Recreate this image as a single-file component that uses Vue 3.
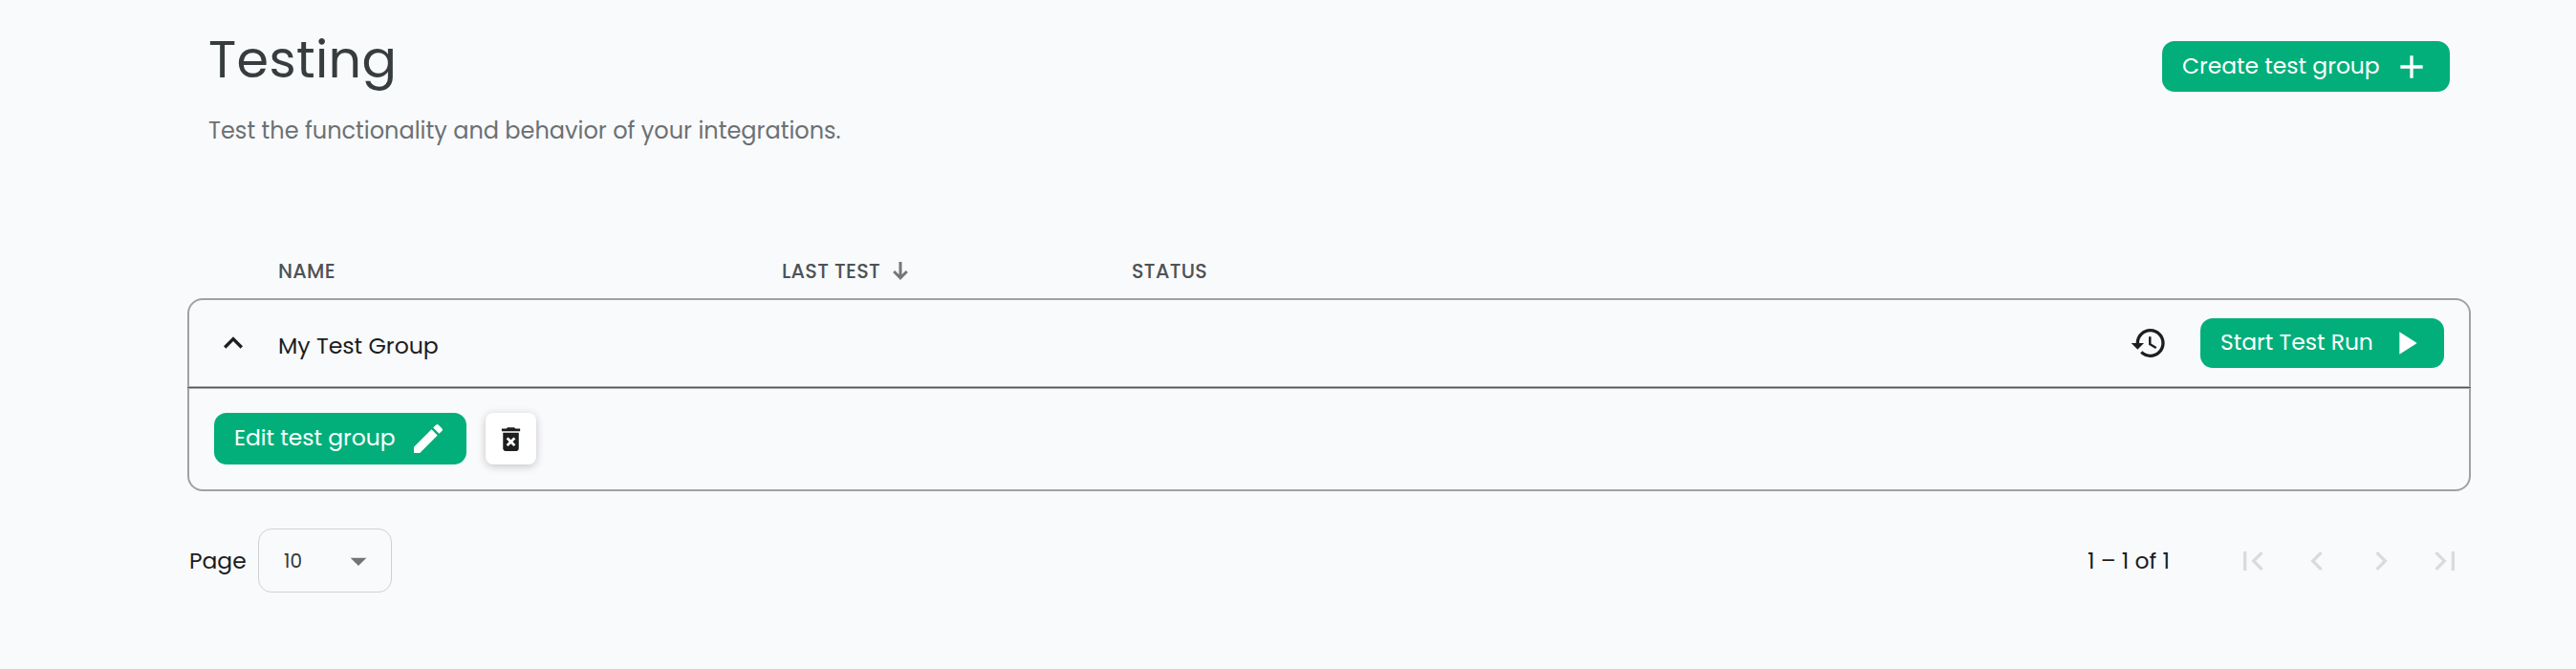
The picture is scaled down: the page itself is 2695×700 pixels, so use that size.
<script setup>
const columns = [
  { key: 'name', label: 'NAME' },
  { key: 'last', label: 'LAST TEST', sorted: true },
  { key: 'status', label: 'STATUS' },
]
const pager = [
  'M18.41 16.59 13.82 12l4.59-4.59L17 6l-6 6 6 6zM6 6h2v12H6z',
  'M15.41 7.41 14 6l-6 6 6 6 1.41-1.41L10.83 12z',
  'M10 6 8.59 7.41 13.17 12l-4.58 4.59L10 18l6-6z',
  'M5.59 7.41 10.18 12l-4.59 4.59L7 18l6-6-6-6zM16 6h2v12h-2z',
]
</script>

<template>
  <main class="page">
    <header class="top">
      <div>
        <h1 class="title">Testing</h1>
        <p class="subtitle">Test the functionality and behavior of your integrations.</p>
      </div>
      <button class="btn create">
        <span class="label">Create test group</span>
        <svg class="icon" viewBox="0 0 24 24"><path d="M19 13h-6v6h-2v-6H5v-2h6V5h2v6h6v2z" /></svg>
      </button>
    </header>

    <div class="columns">
      <div v-for="c in columns" :key="c.key" class="column">
        <span>{{ c.label }}</span>
        <svg v-if="c.sorted" class="sort" viewBox="0 0 16 19"><path d="M8 0v16M1.2 10 8 16.8 14.8 10" /></svg>
      </div>
    </div>

    <section class="card">
      <div class="row">
        <svg class="icon dark" viewBox="0 0 24 24"><path d="m12 8-6 6 1.41 1.41L12 10.83l4.59 4.58L18 14z" /></svg>
        <span class="group">My Test Group</span>
        <svg class="icon dark history" viewBox="0 0 24 24"><path d="M13 3c-4.97 0-9 4.03-9 9H1l3.89 3.89.07.14L9 12H6c0-3.87 3.13-7 7-7s7 3.13 7 7-3.13 7-7 7c-1.93 0-3.68-.79-4.94-2.06l-1.42 1.42C8.27 19.99 10.51 21 13 21c4.97 0 9-4.03 9-9s-4.03-9-9-9zm-1 5v5l4.28 2.54.72-1.21-3.5-2.08V8H12z" /></svg>
        <button class="btn start">
          <span class="label">Start Test Run</span>
          <svg class="icon" viewBox="0 0 24 24"><path d="M8 5v14l11-7z" /></svg>
        </button>
      </div>
      <div class="divider"></div>
      <div class="actions">
        <button class="btn edit">
          <span class="label">Edit test group</span>
          <svg class="icon" viewBox="0 0 24 24"><path d="M3 17.25V21h3.75L17.81 9.94l-3.75-3.75L3 17.25zM20.71 7.04c.39-.39.39-1.02 0-1.41l-2.34-2.34a1 1 0 0 0-1.41 0l-1.83 1.83 3.75 3.75 1.83-1.83z" /></svg>
        </button>
        <button class="delete">
          <svg class="trash" viewBox="0 0 24 24"><path d="M6 19c0 1.1.9 2 2 2h8c1.1 0 2-.9 2-2V7H6v12zm2.46-7.12 1.41-1.41L12 12.59l2.12-2.12 1.41 1.41L13.41 14l2.12 2.12-1.41 1.41L12 15.41l-2.12 2.12-1.41-1.41L10.59 14l-2.13-2.12zM15.5 4l-1-1h-5l-1 1H5v2h14V4z" /></svg>
        </button>
      </div>
    </section>

    <footer class="footer">
      <span class="page-label">Page</span>
      <div class="select">
        <span class="size">10</span>
        <svg class="icon caret" viewBox="0 0 24 24"><path d="m7 10 5 5 5-5z" /></svg>
      </div>
      <span class="range">1 – 1 of 1</span>
      <nav class="pager">
        <svg v-for="d in pager" :key="d" class="icon" viewBox="0 0 24 24"><path :d="d" /></svg>
      </nav>
    </footer>
  </main>
</template>

<style>
body { background: #f9fafc; }
</style>

<style scoped>
.page {
  box-sizing: border-box;
  width: 2695px;
  height: 700px;
  padding: 32px 110px 0 196px;
  overflow: hidden;
  background: #f9fafc;
  color: #1b1d1f;
  font-family: Poppins, Inter, "Open Sans", sans-serif;
  font-size: 23.4px;
  white-space: nowrap;
}
svg { display: block; flex: none; }
.icon { width: 40px; height: 40px; fill: currentColor; }
.top {
  display: flex;
  justify-content: space-between;
  align-items: flex-start;
  height: 228px;
  padding: 0 22px;
}
.title {
  margin: 0;
  font-size: 54px;
  font-weight: 400;
  line-height: 60px;
  letter-spacing: 0.35px;
  color: #373d3f;
}
.subtitle {
  margin: 29px 0 0;
  font-size: 24px;
  line-height: 32px;
  color: #6b7173;
}
.btn {
  display: flex;
  align-items: center;
  justify-content: space-between;
  box-sizing: border-box;
  height: 53px;
  padding: 0 20.5px 0 21px;
  border: 0;
  border-radius: 13px;
  background: #02af7a;
  color: #fff;
  font: inherit;
  line-height: 32px;
}
.label { padding-bottom: 2px; }
.create { width: 301px; margin-top: 11px; }
.columns {
  display: grid;
  grid-template-columns: 527px 366px 1fr;
  height: 52px;
  padding-left: 95px;
  font-size: 20.8px;
  font-weight: 500;
  letter-spacing: 0.3px;
  color: #4d5356;
}
.column { display: flex; align-items: center; height: 47px; }
.sort { width: 16px; height: 19px; margin-left: 13px; fill: none; stroke: #747779; stroke-width: 3; }
.card {
  box-sizing: border-box;
  height: 202px;
  border: 2px solid #9fa1a3;
  border-radius: 16px;
}
.row {
  display: flex;
  align-items: center;
  height: 90px;
  padding: 0 26px;
}
.divider {
  height: 3px;
  margin: 0 -2px;
  background: linear-gradient(#a9abad 1px, #55575a 1px 2px, #a9abad 2px);
}
.dark { color: #1c1e20; }
.group { margin: 4px 0 0 27px; font-size: 23.6px; }
.history { margin: 0 34px 0 auto; }
.start { width: 255px; height: 52px; }
.actions { display: flex; gap: 20px; padding: 25px 26px; }
.edit { width: 264px; height: 54px; }
.delete {
  display: grid;
  place-items: center;
  width: 53px;
  height: 54px;
  padding: 0;
  border: 0;
  border-radius: 8px;
  background: #fff;
  color: #1c1e20;
  box-shadow: 0 2px 10px rgba(0, 0, 0, 0.22);
}
.trash { width: 33px; height: 33px; fill: currentColor; }
.footer { display: flex; align-items: center; height: 67px; margin-top: 39px; }
.page-label { width: 72px; padding: 0 0 1px 2px; }
.select {
  display: flex;
  align-items: center;
  justify-content: space-between;
  box-sizing: border-box;
  width: 140px;
  height: 67px;
  padding: 0 14px 0 26px;
  border: 1px solid #cfd1d4;
  border-radius: 14px;
}
.size { font-size: 20px; color: #33373a; }
.caret { color: #727577; }
.range { margin-left: auto; padding-bottom: 1px; }
.pager { display: flex; gap: 27px; margin: 0 7px 0 67px; color: #d9dbdd; }
</style>
